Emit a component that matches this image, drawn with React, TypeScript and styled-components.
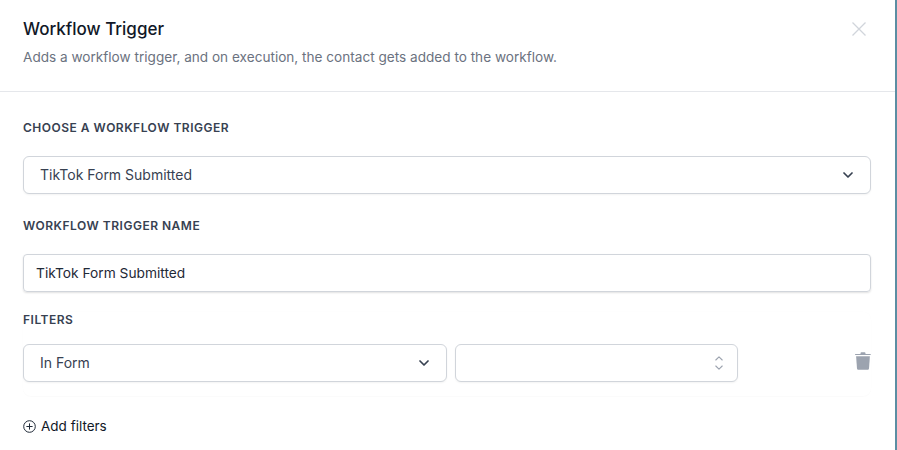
import React from "react";
import styled, { createGlobalStyle } from "styled-components";

const Global = createGlobalStyle`
  html, body { margin: 0; padding: 0; background: #fff; }
  body { font-family: Inter, "Liberation Sans", sans-serif; -webkit-font-smoothing: antialiased; }
  * { box-sizing: border-box; }
`;

const Panel = styled.div`
  width: 897px;
  height: 450px;
  overflow: hidden;
  background: #fff;
  border-right: 2px solid #5b8ea3;
`;

const Header = styled.header`
  height: 92px;
  padding: 19px 28px 0 23px;
  border-bottom: 1px solid #e5e7eb;
  display: flex;
  justify-content: space-between;
  align-items: flex-start;
`;

const Title = styled.h2`
  margin: 0;
  font-size: 17px;
  line-height: 20px;
  font-weight: 500;
  color: #111827;
`;

const Description = styled.p`
  margin: 8px 0 0;
  font-size: 13.6px;
  line-height: 20px;
  color: #6b7280;
`;

const CloseButton = styled.button`
  border: 0;
  background: none;
  padding: 0;
  margin-top: 2px;
  width: 16px;
  height: 16px;
  color: #d1d5db;
  display: flex;
`;

const Body = styled.div`
  padding: 28px 24px 0 23px;
  display: flex;
  flex-direction: column;
`;

const Label = styled.label<{ $gap: number }>`
  display: block;
  font-size: 12px;
  line-height: 16px;
  font-weight: 600;
  letter-spacing: 0.5px;
  text-transform: uppercase;
  color: #374151;
  margin-bottom: ${(p) => p.$gap}px;
`;

const SelectBox = styled.div<{ $width?: number; $gap?: number; $right?: number }>`
  height: 38px;
  width: ${(p) => (p.$width ? `${p.$width}px` : "100%")};
  border: 1px solid #d1d5db;
  border-radius: 6px;
  background: #fff;
  box-shadow: 0 1px 2px rgba(0, 0, 0, 0.05);
  padding: 0 ${(p) => p.$right ?? 17}px 0 16px;
  margin-bottom: ${(p) => p.$gap ?? 0}px;
  display: flex;
  align-items: center;
  justify-content: space-between;
  font-size: 14px;
  color: #374151;
  flex: none;
`;

const SelectValue = styled.span`
  margin-bottom: 2px;
`;

const TextInput = styled.div`
  height: 38px;
  border: 1px solid #d1d5db;
  border-radius: 4px;
  box-shadow: 0 1px 2px rgba(0, 0, 0, 0.12);
  padding: 0 12px 1px;
  display: flex;
  align-items: center;
  font-size: 13.75px;
  color: #1f2937;
  margin-bottom: 20px;
`;

const FilterCard = styled.div`
  height: 84px;
  border-radius: 8px;
  box-shadow: 0 1px 1px rgba(0, 0, 0, 0.015), 0 0 2px rgba(0, 0, 0, 0.015);
  background: #fff;
`;

const FilterRow = styled.div`
  display: flex;
  align-items: center;
  gap: 8px;
`;

const TrashButton = styled.button`
  border: 0;
  background: none;
  padding: 0;
  margin: 0 0 4px auto;
  width: 16px;
  height: 18px;
  color: #9ca3af;
  display: flex;
`;

const AddFilters = styled.button`
  border: 0;
  background: none;
  padding: 0;
  margin-top: 20px;
  display: flex;
  align-items: center;
  gap: 5px;
  font-family: inherit;
  font-size: 13.5px;
  line-height: 20px;
  font-weight: 400;
  color: #111827;
`;

const Chevron = () => (
  <svg width="10" height="6" viewBox="0 0 10 6" fill="none" stroke="#374151" strokeWidth="1.7" strokeLinecap="round" strokeLinejoin="round">
    <path d="M1 1l4 4 4-4" />
  </svg>
);

export default function App() {
  return (
    <Panel>
      <Global />
      <Header>
        <div>
          <Title>Workflow Trigger</Title>
          <Description>Adds a workflow trigger, and on execution, the contact gets added to the workflow.</Description>
        </div>
        <CloseButton aria-label="Close">
          <svg width="16" height="16" viewBox="0 0 16 16" fill="none" stroke="currentColor" strokeWidth="1.3">
            <path d="M1.5 1.5l13 13M14.5 1.5l-13 13" />
          </svg>
        </CloseButton>
      </Header>
      <Body>
        <Label $gap={20}>Choose a workflow trigger</Label>
        <SelectBox $gap={24}>
          <SelectValue>TikTok Form Submitted</SelectValue>
          <Chevron />
        </SelectBox>
        <Label $gap={20}>Workflow trigger name</Label>
        <TextInput>TikTok Form Submitted</TextInput>
        <FilterCard>
          <Label $gap={16}>Filters</Label>
          <FilterRow>
            <SelectBox $width={424}>
              <SelectValue>In Form</SelectValue>
              <Chevron />
            </SelectBox>
            <SelectBox $width={283} $right={14}>
              <span />
              <svg width="8" height="14" viewBox="0 0 8 14" fill="none" stroke="#9ca3af" strokeWidth="1.1" strokeLinecap="round" strokeLinejoin="round">
                <path d="M.8 4 4 .8 7.200 4M.8 10 4 13.200 7.200 10" />
              </svg>
            </SelectBox>
            <TrashButton aria-label="Delete">
              <svg width="16" height="18" viewBox="0 0 16 18" fill="currentColor">
                <path d="M5.5 1.2c0-.5.4-.9.9-.9h3.200c.5 0 .9.4.9.9V2h4.700c.3 0 .6.2.6.5v.6H0v-.6C0 2.200.3 2 .6 2h4.900z" />
                <path d="M1.100 4.200h13.800l-.9 12.300c-.1.8-.7 1.300-1.400 1.300H3.400c-.7 0-1.300-.5-1.400-1.300z" />
              </svg>
            </TrashButton>
          </FilterRow>
        </FilterCard>
        <AddFilters>
          <svg width="13" height="13" viewBox="0 0 13 13" fill="none" stroke="#1f2937" strokeWidth="1">
            <circle cx="6.500" cy="6.500" r="5.800" />
            <path d="M6.500 3.400v6.200M3.400 6.500h6.200" />
          </svg>
          Add filters
        </AddFilters>
      </Body>
    </Panel>
  );
}
